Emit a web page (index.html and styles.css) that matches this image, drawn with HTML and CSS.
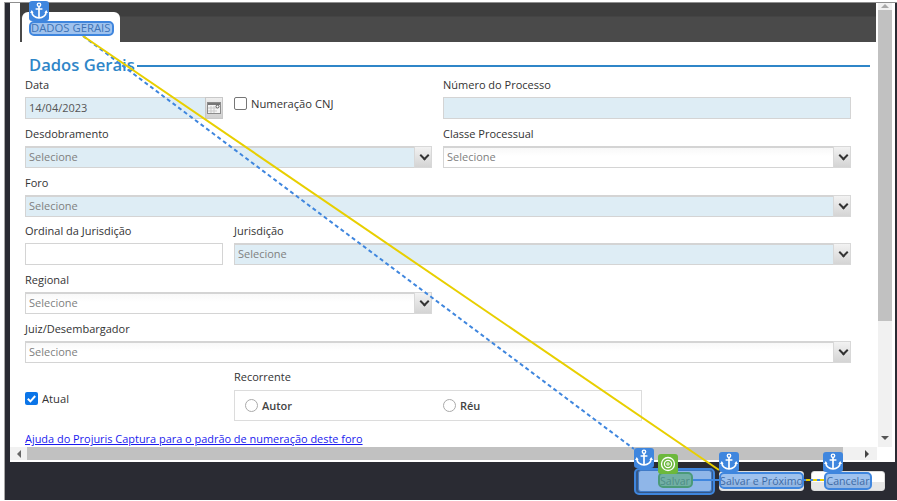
FILE: index.html
```html
<!DOCTYPE html>
<html lang="pt-BR">
  <head>
    <meta charset="UTF-8" />
    <meta name="viewport" content="width=device-width, initial-scale=1.0" />
    <title>Dados Gerais</title>
    <link rel="stylesheet" href="styles.css">
  </head>
  <body>
    <svg class="icon-defs" width="0" height="0">
      <symbol id="anchor" viewBox="0 0 20 20">
        <circle cx="10" cy="3.8" r="1.7" fill="none" stroke="#fff" stroke-width="1.4" />
        <path d="M10 5.5V17M6.6 8h6.8M2.8 10.6c.2 3.8 3.4 6.2 7.2 6.4 3.8-.2 7-2.6 7.2-6.4" fill="none" stroke="#fff" stroke-width="1.7" />
        <path d="M1 12l1.8-3 1.8 3zM15.4 12l1.8-3 1.8 3z" fill="#fff" />
      </symbol>
    </svg>

    <div class="app">
      <div class="shell">
        <div class="dialog">
          <div class="main">
            <div class="tabbar">
              <div class="tab">DADOS GERAIS</div>
            </div>

            <div class="form">
              <div class="section-title">
                <h2>Dados Gerais</h2>
                <span class="section-line"></span>
              </div>

              <div class="grid">
                <div class="field">
                  <label>Data</label>
                  <div class="date-row">
                    <div class="control blue">14/04/2023</div>
                    <span class="date-btn">
                      <svg width="14" height="12" viewBox="0 0 14 12">
                        <rect x="0.5" y="0.5" width="13" height="11" fill="#f4f4f4" stroke="#8b8b8b" />
                        <path d="M1 2h12" stroke="#777" stroke-width="2" />
                        <path d="M1 6h9M1 9h9M4 4v7M7 4v7" stroke="#c9c9c9" />
                        <circle cx="10.5" cy="4.5" r="1.5" fill="#fff" stroke="#555" />
                      </svg>
                    </span>
                  </div>
                </div>
                <div class="field check-field">
                  <span class="check"></span>
                  <span class="check-text">Numeração CNJ</span>
                </div>
                <div class="field">
                  <label>Número do Processo</label>
                  <div class="control blue"></div>
                </div>

                <div class="field span-2">
                  <label>Desdobramento</label>
                  <div class="control blue select">Selecione<span class="arrow"></span></div>
                </div>
                <div class="field">
                  <label>Classe Processual</label>
                  <div class="control select">Selecione<span class="arrow"></span></div>
                </div>

                <div class="field span-3">
                  <label>Foro</label>
                  <div class="control blue select">Selecione<span class="arrow"></span></div>
                </div>

                <div class="field">
                  <label>Ordinal da Jurisdição</label>
                  <div class="control"></div>
                </div>
                <div class="field span-2">
                  <label>Jurisdição</label>
                  <div class="control blue select">Selecione<span class="arrow"></span></div>
                </div>

                <div class="field span-2">
                  <label>Regional</label>
                  <div class="control select">Selecione<span class="arrow"></span></div>
                </div>
                <div class="field"></div>

                <div class="field span-3">
                  <label>Juiz/Desembargador</label>
                  <div class="control select">Selecione<span class="arrow"></span></div>
                </div>
              </div>

              <div class="extra">
                <div class="atual">
                  <span class="check checked">
                    <svg width="13" height="13" viewBox="0 0 13 13">
                      <path d="M2.8 6.8l2.6 2.6 4.8-5.4" fill="none" stroke="#fff" stroke-width="2" />
                    </svg>
                  </span>
                  <span class="check-text">Atual</span>
                </div>
                <div class="recorrente">
                  <label>Recorrente</label>
                  <div class="radio-box">
                    <div class="radio-item"><span class="radio"></span>Autor</div>
                    <div class="radio-item"><span class="radio"></span>Réu</div>
                  </div>
                </div>
              </div>

              <a class="help" href="#">Ajuda do Projuris Captura para o padrão de numeração deste foro</a>
            </div>

            <div class="hscroll">
              <span class="arrow-left"></span>
              <span class="hthumb"></span>
              <span class="arrow-right"></span>
            </div>
          </div>

          <div class="vscroll">
            <span class="arrow-up"></span>
            <span class="vthumb"></span>
            <span class="arrow-down"></span>
          </div>
        </div>

        <div class="footer">
          <button class="btn btn-save">Salvar</button>
          <button class="btn btn-next">Salvar e Próximo</button>
          <button class="btn btn-cancel">Cancelar</button>
        </div>
      </div>

      <!-- camada de anotacoes por cima da tela -->
      <svg class="links" width="897" height="501" viewBox="0 0 897 501">
        <path d="M83 36L634 449" fill="none" stroke="#3f86de" stroke-width="2" stroke-dasharray="4 3" />
        <path d="M83 36L719 470" fill="none" stroke="#e8cf00" stroke-width="2" />
        <path d="M692 480H720" stroke="#3f86de" stroke-width="2" />
        <path d="M803 480H824" stroke="#e8cf00" stroke-width="2" />
        <path d="M803 480H824" stroke="#3f86de" stroke-width="2" stroke-dasharray="3 4" />
      </svg>

      <span class="mark mark-tab"></span>
      <span class="mark mark-save-box"></span>
      <span class="mark mark-save-text"></span>
      <span class="mark mark-next"></span>
      <span class="mark mark-cancel"></span>

      <svg class="anchor anchor-tab"><use href="#anchor" /></svg>
      <svg class="anchor anchor-save"><use href="#anchor" /></svg>
      <svg class="anchor anchor-next"><use href="#anchor" /></svg>
      <svg class="anchor anchor-cancel"><use href="#anchor" /></svg>

      <span class="target">
        <svg width="20" height="20" viewBox="0 0 20 20">
          <g fill="none" stroke="#fff">
            <circle cx="10" cy="10" r="6.5" stroke-width="1.3" />
            <circle cx="10" cy="10" r="3.6" stroke-width="1.2" />
            <circle cx="10" cy="10" r="1.2" stroke-width="1" />
          </g>
        </svg>
      </span>
    </div>
  </body>
</html>
```

FILE: styles.css
```css
* {
  box-sizing: border-box;
}

body {
  margin: 0;
  background-color: #fff;
  font-family: "Open Sans", sans-serif;
  font-size: 11px;
  color: #333;
  overflow: hidden;
}

.icon-defs {
  position: absolute;
}

.app {
  position: relative;
  width: 897px;
  height: 501px;
  padding: 2px 0 1px 4px;
}

.shell {
  display: flex;
  flex-direction: column;
  height: 100%;
  background-color: #2a2b33;
  border-top: 1px solid #8f8f8f;
  border-left: 1px solid #a8a8a8;
  padding-left: 5px;
  padding-right: 2px;
}

.dialog {
  display: flex;
  height: 459px;
  background-color: #fff;
}

.main {
  display: flex;
  flex-direction: column;
  width: 867px;
}

.tabbar {
  height: 39px;
  margin-left: 10px;
  margin-right: 1px;
  padding: 9px 0 0 2px;
  background: linear-gradient(#3e3e3e 0, #3e3e3e 13px, #4a4a4a 14px);
}

.tab {
  width: 98px;
  height: 30px;
  padding: 9px 0 0 9px;
  background-color: #fff;
  border-radius: 6px 6px 0 0;
  font-size: 11.3px;
  font-weight: 500;
  line-height: 14px;
  white-space: nowrap;
  color: #3c5f8c;
}

.form {
  flex: 1;
  padding-left: 15px;
  overflow: hidden;
}

.section-title {
  display: flex;
  align-items: center;
  height: 27px;
  margin-top: 9px;
  margin-bottom: -2.7px;
  padding-left: 4px;
  margin-right: 7px;
}

h2 {
  margin: 0;
  font-size: 16.6px;
  font-weight: 600;
  color: #2f86c8;
  white-space: nowrap;
}

.section-line {
  flex: 1;
  height: 2px;
  background-color: #2f86c8;
  margin-left: 2px;
  margin-top: 3px;
}

.grid {
  display: grid;
  grid-template-columns: 198px 198px 408px;
  grid-auto-rows: 48.67px;
  column-gap: 11px;
  width: 826px;
}

.span-2 {
  grid-column: span 2;
}

.span-3 {
  grid-column: span 3;
}

label {
  display: block;
  height: 22px;
  padding-top: 2px;
  line-height: 16px;
  font-weight: 500;
  color: #333;
}

.control {
  position: relative;
  height: 22px;
  padding-left: 3px;
  border: 1px solid #d4d4d4;
  background-color: #fff;
  line-height: 20px;
  color: #555;
  white-space: nowrap;
}

.control.blue {
  background-color: #deedf5;
}

.select {
  color: #808080;
  border-width: 2px 1px 1px;
  line-height: 17px;
}

.select:not(.blue) {
  background: linear-gradient(#f8f8f8 0, #fff 8px);
}

.arrow {
  position: absolute;
  top: -2px;
  right: -1px;
  width: 18px;
  height: 22px;
  border: 1px solid #d8d8d8;
  background: linear-gradient(#f2f2f2, #d4d4d4);
}

.arrow::after {
  content: "";
  position: absolute;
  left: 6px;
  top: 5px;
  width: 5px;
  height: 5px;
  border-right: 2px solid #333;
  border-bottom: 2px solid #333;
  transform: rotate(45deg);
}

.date-row {
  position: relative;
}

.date-btn {
  position: absolute;
  top: 0;
  right: 0;
  display: flex;
  align-items: center;
  justify-content: center;
  width: 18px;
  height: 22px;
  border: 1px solid #c8c8c8;
  background: linear-gradient(#eee, #cfcfcf);
}

.check-field {
  display: flex;
  align-items: flex-start;
  padding-top: 22px;
}

.check {
  display: inline-block;
  width: 13px;
  height: 13px;
  margin-top: 0;
  border: 1px solid #767676;
  border-radius: 2px;
  background-color: #fff;
}

.check-text {
  margin-left: 4px;
  font-size: 11.2px;
  line-height: 13px;
  font-weight: 500;
}

.check.checked {
  border: 0;
  background-color: #0b75e8;
}

.check.checked svg {
  display: block;
}

.extra {
  display: flex;
  height: 65px;
}

.atual {
  display: flex;
  align-items: flex-start;
  width: 209px;
  padding-top: 25px;
}

.recorrente {
  width: 408px;
}

.recorrente label {
  height: 23px;
}

.radio-box {
  display: grid;
  grid-template-columns: 198px 1fr;
  height: 31px;
  padding-left: 10px;
  border: 1px solid #dcdcdc;
  align-items: center;
}

.radio-item {
  display: flex;
  align-items: center;
  gap: 4px;
  font-size: 11px;
  font-weight: 600;
  color: #444;
}

.radio {
  width: 13px;
  height: 13px;
  border: 1px solid #aaa;
  border-radius: 50%;
}

.help {
  display: block;
  line-height: 14px;
  font-size: 10.93px;
  font-weight: 500;
  white-space: nowrap;
  color: #1a1aee;
}

.hscroll {
  display: flex;
  align-items: center;
  height: 13px;
  margin-bottom: 2px;
  padding-left: 17px;
  background-color: #f1f1f1;
}

.hthumb {
  width: 816px;
  height: 13px;
  background-color: #c1c1c1;
}

.arrow-left,
.arrow-right {
  width: 0;
  height: 0;
  border-top: 4px solid transparent;
  border-bottom: 4px solid transparent;
}

.arrow-left {
  margin-left: -10px;
  margin-right: 6px;
  border-right: 4px solid #666;
}

.arrow-right {
  margin-left: 22px;
  border-left: 4px solid #444;
}

.vscroll {
  display: flex;
  flex-direction: column;
  align-items: center;
  width: 14px;
  height: 444px;
  margin-left: 1px;
  background-color: #f1f1f1;
}

.arrow-up,
.arrow-down {
  width: 0;
  height: 0;
  border-left: 4px solid transparent;
  border-right: 4px solid transparent;
}

.arrow-up {
  border-bottom: 4px solid #a8a8a8;
  margin-top: 1px;
}

.vthumb {
  width: 14px;
  height: 311px;
  margin-top: 2px;
  background-color: #c1c1c1;
}

.arrow-down {
  margin-top: auto;
  margin-bottom: 7px;
  border-top: 4px solid #555;
}

.footer {
  position: relative;
  flex: 1;
}

.btn {
  position: absolute;
  top: 9px;
  height: 20px;
  border: 1px solid #ddd;
  border-radius: 3px;
  background: linear-gradient(#fff 55%, #e6e6e6 55%);
  font-family: "Open Sans", sans-serif;
  font-size: 10.6px;
  color: #3c4f6c;
  padding: 0;
  white-space: nowrap;
}

.btn-save {
  left: 628px;
  top: 8px;
  width: 74px;
  height: 22px;
  border: 1px solid #3f6fb0;
  background: #dfe6f2;
}

.btn-next {
  left: 709px;
  width: 85px;
}

.btn-cancel {
  left: 801px;
  width: 74px;
}

.links {
  position: absolute;
  top: 0;
  left: 0;
  pointer-events: none;
}

.mark {
  position: absolute;
  border: 2px solid #3f86de;
  border-radius: 5px;
  background-color: rgba(63, 134, 222, 0.5);
}

.mark-tab {
  left: 29px;
  top: 21px;
  width: 85px;
  height: 15px;
}

.mark-save-box {
  left: 634px;
  top: 468px;
  width: 81px;
  height: 27px;
}

.mark-save-text {
  left: 658px;
  top: 472px;
  width: 35px;
  height: 16px;
  border-color: #4b9a78;
  background-color: rgba(90, 170, 110, 0.55);
}

.mark-next {
  left: 719px;
  top: 472px;
  width: 85px;
  height: 17px;
}

.mark-cancel {
  left: 824px;
  top: 472px;
  width: 48px;
  height: 18px;
}

.anchor {
  position: absolute;
  width: 20px;
  height: 20px;
  border-radius: 3px;
  background-color: #3f86de;
}

.anchor-tab {
  left: 29px;
  top: 1px;
}

.anchor-save {
  left: 634px;
  top: 448px;
}

.anchor-next {
  left: 719px;
  top: 452px;
}

.anchor-cancel {
  left: 823px;
  top: 452px;
}

.target {
  position: absolute;
  left: 658px;
  top: 454px;
  width: 20px;
  height: 20px;
  border-radius: 3px;
  background-color: #6cb83c;
}

.target svg {
  display: block;
}
```
